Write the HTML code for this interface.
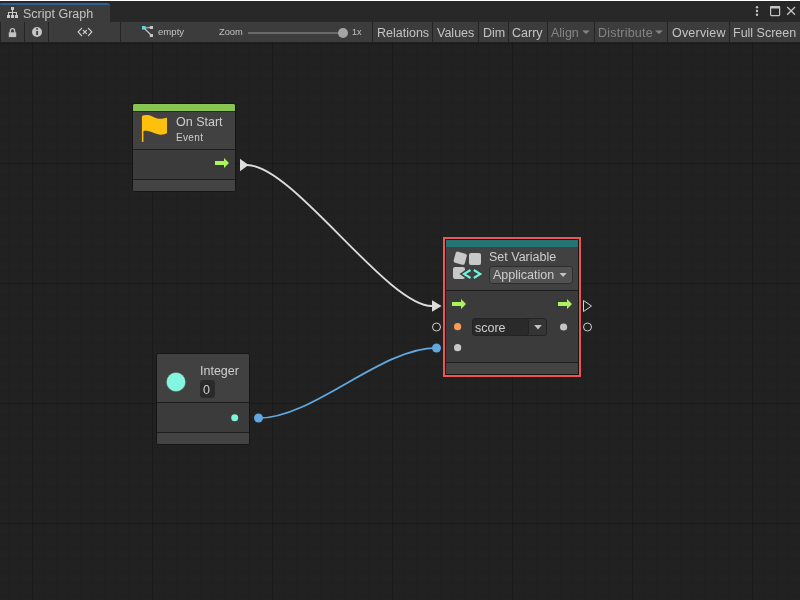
<!DOCTYPE html>
<html><head><meta charset="utf-8">
<style>
*{margin:0;padding:0;box-sizing:border-box}
html,body{width:800px;height:600px;overflow:hidden;-webkit-font-smoothing:antialiased;background:#202020;font-family:"Liberation Sans",sans-serif;position:relative}
.a{position:absolute}
.t{position:absolute;white-space:nowrap;line-height:1;will-change:transform}
#grid{position:absolute;left:0;top:42px;width:800px;height:558px;
 background-color:#212121;
 background-image:
  linear-gradient(to right,#1a1a1a 0,#1a1a1a 1px,transparent 1px),
  linear-gradient(to bottom,#1a1a1a 0,#1a1a1a 1px,transparent 1px),
  linear-gradient(to right,#1f1f1f 0,#1f1f1f 1px,transparent 1px),
  linear-gradient(to bottom,#1f1f1f 0,#1f1f1f 1px,transparent 1px);
 background-size:120px 120px,120px 120px,12px 12px,12px 12px;
 background-position:32px 1px,32px 1px,8px 1px,8px 1px;
}
.sep{position:absolute;top:22px;width:1px;height:20px;background:#242424}
.btn{position:absolute;will-change:transform;line-height:1;top:27px;font-size:12.5px;color:#c4c4c4}
.dis{color:#858585}
.node{position:absolute;background:#414141;border:1px solid #151515;border-radius:2.5px;overflow:hidden}
</style></head><body>
<!-- top strips -->
<div class="a" style="left:0;top:0;width:800px;height:1px;background:#ffffff"></div>
<div class="a" style="left:0;top:1px;width:800px;height:1px;background:#262626"></div>
<div class="a" style="left:0;top:2px;width:800px;height:20px;background:#282828"></div>
<!-- tab -->
<div class="a" style="left:0;top:3px;width:110px;height:19px;background:#3c3c3c;border-top:2px solid #2d6296;border-top-right-radius:3px;border-top-left-radius:1px"></div>
<svg class="a" style="left:0;top:0" width="30" height="22" viewBox="0 0 30 22">
 <g fill="#c8c8c8">
  <rect x="11" y="7" width="3" height="3"/>
  <rect x="12" y="10" width="1" height="2"/>
  <rect x="8" y="12" width="9" height="1"/>
  <rect x="8" y="13" width="1" height="2"/>
  <rect x="12" y="13" width="1" height="2"/>
  <rect x="16" y="13" width="1" height="2"/>
  <rect x="7" y="15" width="3" height="3"/>
  <rect x="11" y="15" width="3" height="3"/>
  <rect x="15" y="15" width="3" height="3"/>
 </g>
</svg>
<div class="t" style="left:23px;top:8px;font-size:12.5px;color:#c4c4c4">Script Graph</div>
<!-- window icons -->
<svg class="a" style="left:740px;top:0" width="60" height="22" viewBox="0 0 60 22">
 <g fill="#c4c4c4">
  <circle cx="17" cy="7.3" r="1.2"/><circle cx="17" cy="11" r="1.2"/><circle cx="17" cy="14.8" r="1.2"/>
 </g>
 <rect x="30.6" y="6.6" width="9" height="9" rx="0.8" fill="none" stroke="#c4c4c4" stroke-width="1.2"/>
 <rect x="30.4" y="6.2" width="9.4" height="2.3" fill="#c4c4c4"/>
 <path d="M47.2 7 L55 14.8 M55 7 L47.2 14.8" stroke="#c4c4c4" stroke-width="1.3"/>
</svg>
<!-- toolbar -->
<div class="a" style="left:0;top:22px;width:800px;height:20px;background:#3c3c3c"></div>
<div class="sep" style="left:0"></div>
<div class="sep" style="left:24px"></div>
<div class="sep" style="left:48px"></div>
<div class="sep" style="left:120px"></div>
<div class="sep" style="left:372px"></div>
<div class="sep" style="left:432px"></div>
<div class="sep" style="left:478px"></div>
<div class="sep" style="left:508px"></div>
<div class="sep" style="left:547px"></div>
<div class="sep" style="left:594px"></div>
<div class="sep" style="left:667px"></div>
<div class="sep" style="left:729px"></div>
<svg class="a" style="left:0;top:22px" width="372" height="20" viewBox="0 22 372 20">
 <!-- lock -->
 <path d="M10.4 32.5 L10.4 30.8 A2.1 2.1 0 0 1 14.6 30.8 L14.6 32.5" fill="none" stroke="#c4c4c4" stroke-width="1.3"/>
 <rect x="8.8" y="32.3" width="7.4" height="4.8" fill="#c4c4c4"/>
 <!-- info -->
 <circle cx="37" cy="32" r="5" fill="#c4c4c4"/>
 <rect x="36.2" y="31" width="1.8" height="4" fill="#3c3c3c"/>
 <rect x="36.2" y="28.2" width="1.8" height="1.5" fill="#3c3c3c"/>
 <!-- <x> -->
 <path d="M81.6 28.3 L78.1 31.9 L81.6 35.6 M88.4 28.3 L91.8 31.9 L88.4 35.6 M83.3 30.4 L86.5 33.6 M86.5 30.4 L83.3 33.6" fill="none" stroke="#d0d0d0" stroke-width="1.2" stroke-linecap="round" stroke-linejoin="round"/>
 <!-- graph icon -->
 <path d="M144 28 L151.5 27.5 M144 28 L151.5 35.5" stroke="#c4c4c4" stroke-width="1.2"/>
 <rect x="142" y="26" width="3.6" height="3.6" fill="#5ed8c8"/>
 <rect x="149.8" y="26" width="3.2" height="3" fill="#c4c4c4"/>
 <rect x="149.8" y="34" width="3.2" height="3" fill="#c4c4c4"/>
 <!-- slider -->
 <rect x="248" y="32" width="95" height="2" fill="#6a6a6a"/>
 <circle cx="343" cy="33" r="5" fill="#a4a4a4"/>
</svg>
<div class="t" style="left:158px;top:27px;font-size:9.6px;color:#c4c4c4">empty</div>
<div class="t" style="left:219px;top:28px;font-size:9.3px;color:#c0c0c0">Zoom</div>
<div class="t" style="left:352px;top:28px;font-size:9px;color:#c0c0c0">1x</div>
<div class="btn" style="left:377px">Relations</div>
<div class="btn" style="left:437px">Values</div>
<div class="btn" style="left:483px">Dim</div>
<div class="btn" style="left:512px">Carry</div>
<div class="btn dis" style="left:551px">Align</div>
<div class="btn dis" style="left:598px;letter-spacing:0.2px">Distribute</div>
<div class="btn" style="left:672px;letter-spacing:0.2px">Overview</div>
<div class="btn" style="left:733px">Full Screen</div>
<svg class="a" style="left:570px;top:22px" width="100" height="20" viewBox="570 22 100 20">
 <path d="M582.2 30.4 L589.8 30.4 L586 34.1 Z" fill="#858585"/>
 <path d="M655.1 30.4 L662.9 30.4 L659 34.1 Z" fill="#858585"/>
</svg>

<!-- grid -->
<div id="grid"></div>

<!-- curves & outside ports -->
<svg class="a" style="left:0;top:0" width="800" height="600" viewBox="0 0 800 600">
 <path d="M247 165 C293 165 387 306 432 306" fill="none" stroke="#dcdcdc" stroke-width="1.8"/>
 <path d="M258.4 418.2 C313 418.2 381 347.8 436.4 347.8" fill="none" stroke="#60a8df" stroke-width="1.8"/>
 <path d="M240 158.8 L248.6 165 L240 171.2 Z" fill="#dcdcdc"/>
 <path d="M432 300.2 L441.6 306 L432 311.8 Z" fill="#dcdcdc"/>
 <circle cx="436.5" cy="327" r="4" fill="none" stroke="#d0d0d0" stroke-width="1"/>
 <circle cx="436.5" cy="348" r="4.5" fill="#60a8df"/>
 <circle cx="258.5" cy="418" r="4.5" fill="#60a8df"/>
 <path d="M583.5 300.5 L591.5 306 L583.5 311.5 Z" fill="none" stroke="#d0d0d0" stroke-width="1"/>
 <circle cx="587.5" cy="327" r="4" fill="none" stroke="#d0d0d0" stroke-width="1"/>
</svg>

<!-- On Start node -->
<div class="node" style="left:132px;top:103px;width:104px;height:89px">
 <div class="a" style="left:0;top:0;width:102px;height:7px;background:#88c452"></div>
 <div class="a" style="left:0;top:7px;width:102px;height:1px;background:#2a2a2a"></div>
 <div class="a" style="left:0;top:45px;width:102px;height:1px;background:#1e1e1e"></div>
 <div class="a" style="left:0;top:46px;width:102px;height:29px;background:#3b3b3b"></div>
 <div class="a" style="left:0;top:75px;width:102px;height:1px;background:#1e1e1e"></div>
 <div class="a" style="left:0;top:76px;width:102px;height:11px;background:#434343"></div>
</div>
<svg class="a" style="left:0;top:0" width="800" height="600" viewBox="0 0 800 600">
 <path d="M141.9 116 C144.5 114.6 148.5 114.6 152.5 116.4 C156 118.2 159.5 119.3 163 118.6 C165 118.2 166 117.9 167 117.8 L167 133 C165 134.4 162 135 159 134.5 C155 133.8 152 131.5 148 130.9 C146 130.7 144.5 130.8 143.4 131.2 L143.4 142 L141.9 142 Z" fill="#fdc00c"/>
 <path d="M215 161 L224 161 L224 158 L229 163 L224 168 L224 165 L215 165 Z" fill="#a9f55c"/>
</svg>
<div class="t" style="left:176px;top:116px;font-size:12.5px;color:#cecece">On Start</div>
<div class="t" style="left:176px;top:133px;font-size:10px;letter-spacing:0.35px;color:#cecece">Event</div>

<!-- Integer node -->
<div class="node" style="left:156px;top:353px;width:94px;height:92px">
 <div class="a" style="left:0;top:48px;width:92px;height:1px;background:#1e1e1e"></div>
 <div class="a" style="left:0;top:49px;width:92px;height:29px;background:#3b3b3b"></div>
 <div class="a" style="left:0;top:78px;width:92px;height:1px;background:#1e1e1e"></div>
 <div class="a" style="left:0;top:79px;width:92px;height:11px;background:#434343"></div>
 <div class="a" style="left:43px;top:26px;width:15px;height:18px;background:#2a2a2a;border-radius:3px"></div>
</div>
<div class="t" style="left:200px;top:365px;font-size:12.5px;color:#cecece">Integer</div>
<div class="t" style="left:203px;top:384px;font-size:12.5px;color:#cecece">0</div>
<svg class="a" style="left:0;top:0" width="800" height="600" viewBox="0 0 800 600">
 <circle cx="176" cy="382" r="9.7" fill="#82f6e0" stroke="#5a4a40" stroke-width="0.6"/>
 <circle cx="234.7" cy="417.7" r="3.5" fill="#7ef4dc"/>
</svg>

<!-- Set Variable node -->
<div class="a" style="left:443px;top:237px;width:138px;height:140px;border:2px solid #f05452;border-radius:0"></div>
<div class="node" style="left:445px;top:239px;width:134px;height:136px;border-radius:2px">
 <div class="a" style="left:0;top:0;width:132px;height:7px;background:#237474"></div>
 <div class="a" style="left:0;top:50px;width:132px;height:1px;background:#1e1e1e"></div>
 <div class="a" style="left:0;top:51px;width:132px;height:71px;background:#3b3b3b"></div>
 <div class="a" style="left:0;top:122px;width:132px;height:1px;background:#1e1e1e"></div>
 <div class="a" style="left:0;top:123px;width:132px;height:11px;background:#434343"></div>
 <!-- dropdown application -->
 <div class="a" style="left:43px;top:26px;width:84px;height:18px;background:#515151;border:1px solid #2e2e2e;border-radius:3px"></div>
 <!-- score field -->
 <div class="a" style="left:80px;top:78px;width:21px;height:18px;background:#353535;border:1px solid #232323;border-radius:0 3px 3px 0"></div>
 <div class="a" style="left:26px;top:78px;width:57px;height:18px;background:#2a2a2a;border:1px solid #232323;border-radius:3px"></div>
</div>
<div class="t" style="left:489px;top:251px;font-size:12.5px;color:#cecece">Set Variable</div>
<div class="t" style="left:493px;top:269px;font-size:12.5px;color:#cecece">Application</div>
<div class="t" style="left:475px;top:321.5px;font-size:12.5px;color:#cecece">score</div>
<svg class="a" style="left:0;top:0" width="800" height="600" viewBox="0 0 800 600">
 <!-- icon -->
 <rect x="454.5" y="252.5" width="11.5" height="11.5" rx="2" fill="#c8c8c8" transform="rotate(15 460.3 258.2)"/>
 <rect x="469" y="253" width="12" height="12" rx="2" fill="#c8c8c8"/>
 <rect x="453" y="267" width="12" height="12" rx="2" fill="#c8c8c8"/>
 <path d="M470.5 269 L463.5 274 L470.5 279 M473.8 269 L480.8 274 L473.8 279" fill="none" stroke="#3e3e3e" stroke-width="4.6"/>
 <path d="M470.5 270 L464 274 L470.5 278 M473.8 270 L480.3 274 L473.8 278" fill="none" stroke="#70f2e0" stroke-width="2.1"/>
 <!-- dropdown triangles -->
 <path d="M559.5 273 L566.7 273 L563.1 277 Z" fill="#c4c4c4"/>
 <path d="M534.2 325 L541.8 325 L538 329.5 Z" fill="#c4c4c4"/>
 <!-- arrows -->
 <path d="M452 302 L461 302 L461 299 L466 304 L461 309 L461 306 L452 306 Z" fill="#a9f55c"/>
 <path d="M558 302 L567 302 L567 299 L572 304 L567 309 L567 306 L558 306 Z" fill="#a9f55c"/>
 <!-- ports -->
 <circle cx="457.6" cy="326.7" r="3.6" fill="#fb9a54"/>
 <circle cx="457.6" cy="347.7" r="3.6" fill="#c8c8c8"/>
 <circle cx="563.6" cy="327" r="3.6" fill="#c4c4c4"/>
</svg>
</body></html>
